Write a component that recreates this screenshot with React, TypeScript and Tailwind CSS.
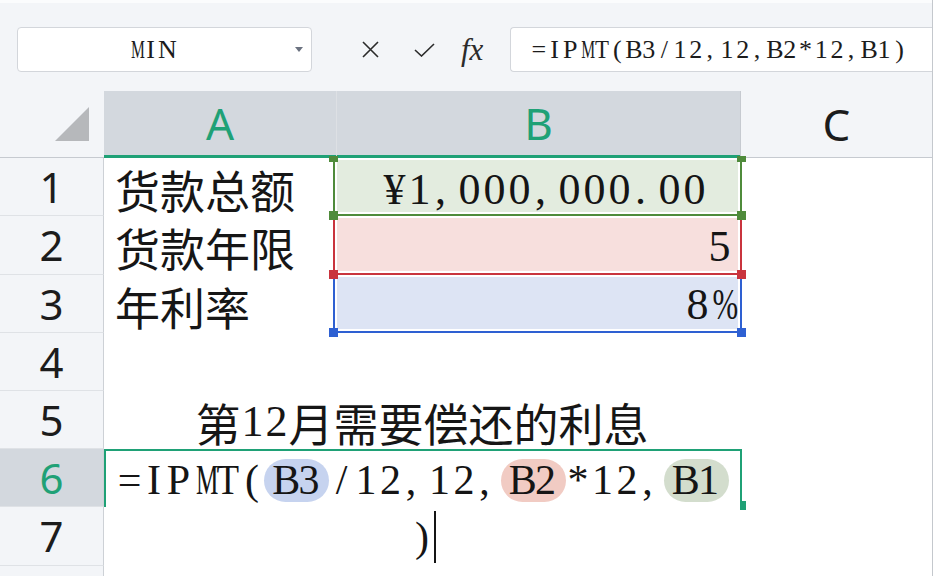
import type { ReactNode } from "react";

// half-width serif characters, each in its own fixed cell (SimSun-like)
function Half({ text, cw }: { text: string; cw: string }) {
  return (
    <>
      {text.split("").map((c, i) => {
        const punct = c === "," || c === ".";
        let squeeze = "";
        if (c === "M") squeeze = "scale-x-[0.6]";
        else if (c === "%") squeeze = "scale-x-[0.7]";
        else if (c === "T") squeeze = "scale-x-[0.88]";
        return (
          <span
            key={i}
            className={`inline-block ${cw} ${punct ? "text-left pl-[3px]" : "text-center"} ${squeeze}`}
          >
            {c}
          </span>
        );
      })}
    </>
  );
}

function Pill({ text, bg }: { text: string; bg: string }) {
  return (
    <span className={`inline-flex items-center h-[43px] px-[8px] rounded-full ${bg}`}>
      <Half text={text} cw="w-[24.5px]" />
    </span>
  );
}

function RowHead({ n, active }: { n: number; active?: boolean }) {
  return (
    <div
      className={`flex items-center justify-center border-r border-b border-r-[#cdd1d6] border-b-[#dfe2e6] font-['Noto_Sans',sans-serif] text-[42px] leading-none ${
        active ? "bg-[#d3d8de] text-[#1fa176]" : "bg-[#f3f5f8] text-[#1c1c1c]"
      }`}
    >
      {n}
    </div>
  );
}

function Label({ children }: { children: ReactNode }) {
  return (
    <div className="flex items-center pl-[11px] pt-[4px] font-['Noto_Sans_CJK_SC',sans-serif] text-[45px] leading-none text-[#161616]">
      {children}
    </div>
  );
}

export default function App() {
  return (
    <div className="w-[934px] h-[576px] overflow-hidden bg-white">
      <div className="w-[933px] h-[576px] border-r border-[#c4c8cd]">
        {/* Toolbar: name box + formula bar */}
        <div className="h-[91px] bg-[#f3f5f8] border-t-[3px] border-[#fbfcfd] flex items-center pt-[5px]">
          <div className="ml-[17px] w-[295px] h-[45px] bg-white border border-[#d3d6db] rounded-[4px] flex items-center">
            <span className="pl-[110px] font-['Liberation_Serif',serif] text-[26px] leading-none text-[#1c1c1c]">
              <Half text="MIN" cw="w-[15px]" />
            </span>
            <svg className="ml-auto mr-[8px]" width="8" height="5" viewBox="0 0 8 5">
              <polygon points="0,0 8,0 4,5" fill="#6b7280" />
            </svg>
          </div>
          <svg className="ml-[50px]" width="17" height="17" viewBox="0 0 17 17">
            <path d="M1 1 L16 16 M16 1 L1 16" stroke="#2b2b2b" strokeWidth="1.6" fill="none" />
          </svg>
          <svg className="ml-[35px]" width="21" height="14" viewBox="0 0 21 14">
            <path d="M1 7 L7.5 13 L20 1" stroke="#2b2b2b" strokeWidth="1.6" fill="none" />
          </svg>
          <span className="ml-[26px] w-[30px] font-['Liberation_Serif',serif] italic text-[31px] leading-none text-[#2b2b2b]">
            fx
          </span>
          <div className="ml-[19px] flex-1 h-[45px] bg-white border border-r-0 border-[#d3d6db] rounded-l-[4px] flex items-center pl-[20px] font-['Liberation_Serif',serif] text-[26px] leading-none text-[#1c1c1c]">
            <Half text="=IPMT(B3/12,12,B2*12,B1)" cw="w-[15.7px]" />
          </div>
        </div>

        {/* Sheet grid */}
        <div className="grid grid-cols-[104px_233px_403px_192px] grid-rows-[67px_58px_59px_58px_58px_58px_58px_59px_20px]">
          {/* header row */}
          <div className="bg-[#f3f5f8] border-b border-[#c6cad0] flex items-end justify-end pr-[15px] pb-[16px]">
            <svg width="34" height="34" viewBox="0 0 34 34">
              <polygon points="34,0 34,34 0,34" fill="#b6b8bb" />
            </svg>
          </div>
          <div className="bg-[#d3d8de] border-b-[3px] border-[#1fa176] flex items-center justify-center font-['Noto_Sans',sans-serif] text-[44px] leading-none text-[#1fa176] border-r border-r-[#dde0e4]">
            A
          </div>
          <div className="bg-[#d3d8de] border-b-[3px] border-[#1fa176] flex items-center justify-center font-['Noto_Sans',sans-serif] text-[44px] leading-none text-[#1fa176]">
            B
          </div>
          <div className="bg-[#f3f5f8] border-b border-l border-[#c6cad0] flex items-center justify-center font-['Noto_Sans',sans-serif] text-[44px] leading-none text-[#1c1c1c]">
            C
          </div>

          {/* row 1 */}
          <RowHead n={1} />
          <Label>货款总额</Label>
          <div className="relative -ml-[4px] -mr-[2px] border-x-2 border-b-2 border-[#4f8b3b] p-[2px] z-10">
            <div className="h-full bg-[#e3ecdf] flex items-center justify-center pl-[14px] pt-[8px] font-['Liberation_Serif',serif] text-[44px] leading-none text-[#151515]">
              <Half text="¥1,000,000.00" cw="w-[25px]" />
            </div>
            <span className="absolute -left-[6px] -top-[2px] w-[9px] h-[6px] bg-[#4f8b3b]" />
            <span className="absolute -right-[6px] -top-[2px] w-[9px] h-[6px] bg-[#4f8b3b]" />
            <span className="absolute -left-[6px] -bottom-[6px] w-[9px] h-[9px] bg-[#4f8b3b]" />
            <span className="absolute -right-[6px] -bottom-[6px] w-[9px] h-[9px] bg-[#4f8b3b]" />
          </div>
          <div />

          {/* row 2 */}
          <RowHead n={2} />
          <Label>货款年限</Label>
          <div className="relative -ml-[4px] -mr-[2px] border-x-2 border-b-2 border-[#c9343d] p-[2px]">
            <div className="h-full bg-[#f7dfdd] flex items-center justify-end pr-[6px] pt-[4px] font-['Liberation_Serif',serif] text-[44px] leading-none text-[#151515]">
              <Half text="5" cw="w-[25px]" />
            </div>
            <span className="absolute -left-[6px] -bottom-[6px] w-[9px] h-[9px] bg-[#c9343d] z-10" />
            <span className="absolute -right-[6px] -bottom-[6px] w-[9px] h-[9px] bg-[#c9343d] z-10" />
          </div>
          <div />

          {/* row 3 */}
          <RowHead n={3} />
          <Label>年利率</Label>
          <div className="relative -ml-[4px] -mr-[2px] border-x-2 border-b-2 border-[#2e60d2] p-[2px]">
            <div className="h-full bg-[#dde4f4] flex items-center justify-end pr-[6px] pt-[4px] font-['Liberation_Serif',serif] text-[44px] leading-none text-[#151515]">
              <Half text="8%" cw="w-[23px]" />
            </div>
            <span className="absolute -left-[6px] -bottom-[6px] w-[9px] h-[9px] bg-[#2e60d2] z-10" />
            <span className="absolute -right-[6px] -bottom-[6px] w-[9px] h-[9px] bg-[#2e60d2] z-10" />
          </div>
          <div />

          {/* row 4 */}
          <RowHead n={4} />
          <div className="col-span-3" />

          {/* row 5: merged A5:B5 */}
          <RowHead n={5} />
          <div className="col-span-2 flex items-center justify-center pt-[4px] font-['Noto_Sans_CJK_SC',sans-serif] text-[45px] leading-none text-[#161616]">
            第
            <span className="font-['Liberation_Serif',serif] text-[44px]">
              <Half text="12" cw="w-[24px]" />
            </span>
            月需要偿还的利息
          </div>
          <div />

          {/* row 6 + 7: cell editor, wraps onto a second line */}
          <RowHead n={6} active />
          <div className="col-span-2 row-span-2 flex flex-col -mr-[2px] font-['Liberation_Serif',serif] text-[42px] leading-none text-[#151515]">
            <div className="relative h-[58px] border-t-2 border-x-2 border-[#1fa176] flex items-center justify-center pt-[2px]">
              <Half text="=IPMT(" cw="w-[24.5px]" />
              <Pill text="B3" bg="bg-[#c6d3ef]" />
              <Half text="/12,12," cw="w-[24.5px]" />
              <Pill text="B2" bg="bg-[#f1cbc3]" />
              <Half text="*12," cw="w-[24.5px]" />
              <Pill text="B1" bg="bg-[#d3ddcd]" />
              <span className="absolute -right-[6px] -bottom-[3px] w-[6px] h-[9px] bg-[#1fa176]" />
            </div>
            <div className="h-[59px] flex items-center justify-center">
              <Half text=")" cw="w-[24.5px]" />
              <span className="inline-block w-[2px] h-[52px] bg-[#151515]" />
            </div>
          </div>
          <div />

          <RowHead n={7} />
          <div />

          {/* row 8 (cut off) */}
          <div className="bg-[#f3f5f8] border-r border-[#cdd1d6]" />
          <div className="col-span-3" />
        </div>
      </div>
    </div>
  );
}
